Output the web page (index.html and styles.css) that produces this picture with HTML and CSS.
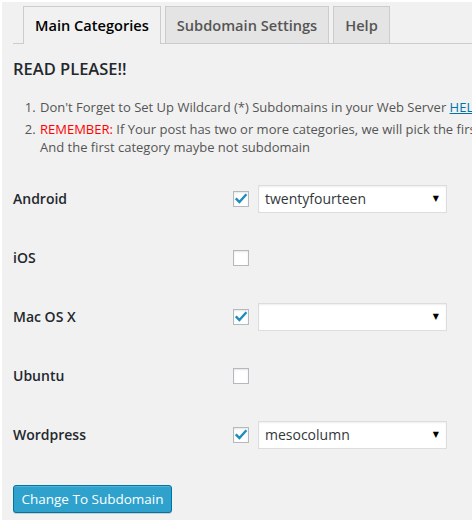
FILE: index.html
```html
<!DOCTYPE html>
<html>
<head>
<meta charset="utf-8">
<link rel="stylesheet" href="styles.css">
</head>
<body>
<div class="wrap">
  <div class="tabs">
    <span class="tab active">Main Categories</span>
    <span class="tab">Subdomain Settings</span>
    <span class="tab">Help</span>
  </div>
  <h3 class="title">READ PLEASE!!</h3>
  <ol class="notes">
    <li><span class="nw">Don't Forget to Set Up Wildcard (*) Subdomains in your Web Server <a href="#">HELP</a></span></li>
    <li><span class="nw"><strong class="warn">REMEMBER:</strong> If Your post has two or more categories, we will pick the first category.</span><br><span class="nw">And the first category maybe not subdomain</span></li>
  </ol>
  <div class="rows">
    <div class="row">
      <div class="label">Android</div>
      <div class="field">
        <span class="cb checked"><svg viewBox="0 0 16 16" width="16" height="16"><path d="M3.6 8.2 L6.4 11 L12.6 4.2" fill="none" stroke="#1e8cbe" stroke-width="2.4" stroke-linecap="square"/></svg></span>
        <div class="select"><span>twentyfourteen</span><span class="arrow">▼</span></div>
      </div>
    </div>
    <div class="row">
      <div class="label">iOS</div>
      <div class="field"><span class="cb"></span></div>
    </div>
    <div class="row">
      <div class="label">Mac OS X</div>
      <div class="field">
        <span class="cb checked"><svg viewBox="0 0 16 16" width="16" height="16"><path d="M3.6 8.2 L6.4 11 L12.6 4.2" fill="none" stroke="#1e8cbe" stroke-width="2.4" stroke-linecap="square"/></svg></span>
        <div class="select"><span></span><span class="arrow">▼</span></div>
      </div>
    </div>
    <div class="row">
      <div class="label">Ubuntu</div>
      <div class="field"><span class="cb"></span></div>
    </div>
    <div class="row">
      <div class="label">Wordpress</div>
      <div class="field">
        <span class="cb checked"><svg viewBox="0 0 16 16" width="16" height="16"><path d="M3.6 8.2 L6.4 11 L12.6 4.2" fill="none" stroke="#1e8cbe" stroke-width="2.4" stroke-linecap="square"/></svg></span>
        <div class="select"><span>mesocolumn</span><span class="arrow">▼</span></div>
      </div>
    </div>
  </div>
  <div class="actions">
    <button class="btn">Change To Subdomain</button>
  </div>
</div>
</body>
</html>
```

FILE: styles.css
```css
html {
  background: #fff;
  overflow: hidden;
}
body {
  margin: 0;
  font-family: "Open Sans", "Liberation Sans", sans-serif;
  color: #444;
}
.wrap {
  margin: 2px 0 0 2px;
  background: #f1f1f1;
  padding: 4px 0 0 11px;
  height: 520px;
  box-sizing: border-box;
  overflow: hidden;
}
.tabs {
  display: flex;
  gap: 4px;
  padding-left: 10px;
  border-bottom: 1px solid #ccc;
  height: 37px;
  align-items: flex-end;
}
.tab {
  display: block;
  font-size: 14.6px;
  font-weight: 600;
  line-height: 24px;
  padding: 6px 11px;
  border: 1px solid #ccc;
  border-bottom: none;
  background: #e4e4e4;
  color: #555;
  white-space: nowrap;
}
.tab.active {
  background: #f1f1f1;
  color: #000;
  margin-bottom: -1px;
  padding-bottom: 7px;
}
.title {
  margin: 13px 0 0;
  font-size: 16.5px;
  font-weight: 600;
  line-height: 24px;
  color: #23282d;
}
.notes {
  margin: 17px 0 0;
  padding-left: 26px;
  font-size: 13px;
  line-height: 18px;
  color: #555;
}
.notes li {
  margin-bottom: 4px;
  padding-left: 1px;
}
.nw {
  white-space: nowrap;
}
.notes a {
  color: #0073aa;
}
.warn {
  color: #ff0000;
  font-weight: normal;
}
.rows {
  margin-top: 13px;
}
.row {
  display: flex;
  align-items: center;
  height: 59px;
}
.label {
  width: 220px;
  font-size: 14px;
  font-weight: 600;
  color: #23282d;
}
.field {
  display: flex;
  align-items: center;
  gap: 9px;
}
.cb {
  width: 16px;
  height: 16px;
  box-sizing: border-box;
  border: 1px solid #b4b9be;
  background: #fff;
  box-shadow: inset 0 1px 2px rgba(0,0,0,.1);
  display: block;
  position: relative;
}
.cb svg {
  position: absolute;
  left: -1px;
  top: -1px;
}
.select {
  width: 189px;
  height: 28px;
  box-sizing: border-box;
  border: 1px solid #ddd;
  background: #fff;
  box-shadow: inset 0 1px 2px rgba(0,0,0,.07);
  display: flex;
  align-items: center;
  justify-content: space-between;
  padding: 0 7px 0 6px;
  font-size: 14px;
  color: #32373c;
}
.arrow {
  font-size: 8px;
  color: #000;
  font-family: "DejaVu Sans", sans-serif;
}
.actions {
  margin-top: 21px;
}
.btn {
  display: block;
  width: 159px;
  height: 28px;
  padding: 0;
  font-family: "Open Sans", "Liberation Sans", sans-serif;
  font-size: 13.5px;
  white-space: nowrap;
  text-align: center;
  color: #fff;
  background: #2ea2cc;
  border: 1px solid #0074a2;
  border-radius: 3px;
  box-shadow: inset 0 1px 0 rgba(120,200,230,.5), 0 1px 0 rgba(0,0,0,.15);
}
```
